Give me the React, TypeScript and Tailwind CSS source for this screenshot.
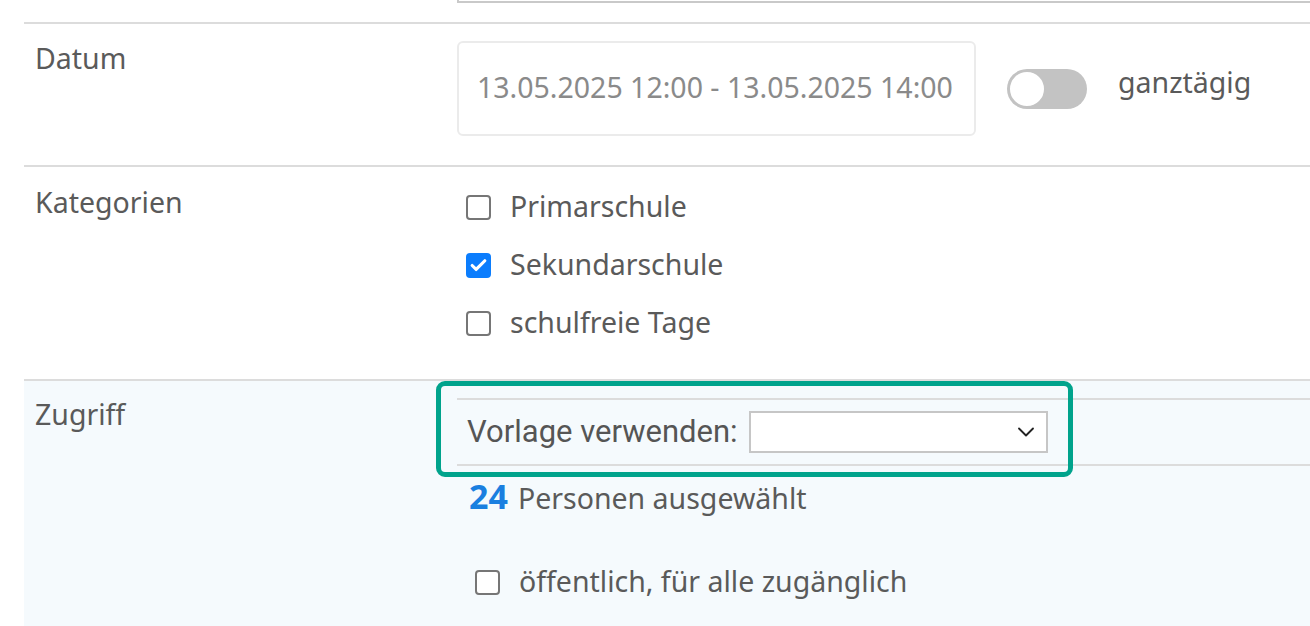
import { Check, ChevronDown } from 'lucide-react';

const font = { fontFamily: '"Noto Sans", Lato, sans-serif' };

function Box({ checked = false }: { checked?: boolean }) {
  if (checked) {
    return (
      <span className="flex h-[25px] w-[25px] shrink-0 items-center justify-center rounded-[4px] bg-[#0b7dfd]">
        <Check className="h-[19px] w-[19px] text-white" strokeWidth={4} />
      </span>
    );
  }
  return <span className="block h-[25px] w-[25px] shrink-0 rounded-[4px] border-2 border-[#767676] bg-white" />;
}

export default function App() {
  return (
    <div className="h-[626px] w-full overflow-hidden bg-white text-[28.5px] text-[#5a5a5a]" style={font}>
      {/* tail of the field above */}
      <div className="ml-[457px] h-[3px] border-b-2 border-l-2 border-[#c9c9c9]" />
      <div className="h-[19px]" />

      <div className="ml-[24px] border-t-2 border-[#dcdcdc]">
        <div className="flex pb-[29px]">
          <div className="w-[433px] pl-[11px] pt-[16px] leading-[36px]">Datum</div>
          <div className="flex items-center pt-[17px]">
            <div className="flex h-[95px] w-[519px] items-center rounded-[6px] border-2 border-[#ebebeb] pb-[3px] pl-[18px] text-[#8a8a8a]">
              13.05.2025 12:00 - 13.05.2025 14:00
            </div>
            <div className="ml-[31px] flex h-[40px] w-[80px] items-center rounded-full bg-[#c3c3c3] pl-[1px]">
              <span className="block h-[38px] w-[38px] rounded-full border-2 border-[#c3c3c3] bg-white" />
            </div>
            <span className="ml-[31px] -mt-[12px]">ganztägig</span>
          </div>
        </div>
      </div>

      <div className="ml-[24px] border-t-2 border-[#dcdcdc]">
        <div className="flex pb-[27px]">
          <div className="w-[433px] pl-[11px] pt-[17px] leading-[36px]">Kategorien</div>
          <div className="pt-[11px]">
            {[
              ['Primarschule', false],
              ['Sekundarschule', true],
              ['schulfreie Tage', false],
            ].map(([label, on]) => (
              <div key={label as string} className="flex h-[58px] items-center gap-[19px] pl-[9px]">
                <Box checked={on as boolean} />
                <span className="-mt-[2px]">{label as string}</span>
              </div>
            ))}
          </div>
        </div>
      </div>

      <div className="relative ml-[24px] h-[300px] border-t-2 border-[#dcdcdc] bg-[#f5fafd]">
        <div className="flex">
          <div className="w-[433px] pl-[11px] pt-[15px] leading-[36px]">Zugriff</div>
          <div className="flex-1 pt-[17px]">
            <div className="flex h-[68px] items-center border-y-2 border-[#dcdcdc] pl-[10px]">
              <span className="mr-[11px] text-[31px] text-[#555]" style={{ fontFamily: 'Roboto, sans-serif' }}>
                Vorlage verwenden:
              </span>
              <div className="flex h-[42px] w-[299px] items-center justify-end border-2 border-[#c6c6c6] bg-white pr-[6px]">
                <ChevronDown className="h-[28px] w-[28px] text-[#222]" strokeWidth={1.6} />
              </div>
            </div>
            <div className="mt-[12px] flex items-baseline pl-[12px] leading-[36px]">
              <span className="mr-[10px] text-[34px] font-bold text-[#1a7fe0]">24</span>
              <span>Personen ausgewählt</span>
            </div>
            <div className="mt-[46px] flex items-center gap-[19px] pl-[18px]">
              <Box />
              <span className="-mt-[2px]">öffentlich, für alle zugänglich</span>
            </div>
          </div>
        </div>
        <div className="pointer-events-none absolute left-[412px] top-0 h-[96px] w-[637px] rounded-[9px] border-[5px] border-[#00a38c]" />
      </div>
    </div>
  );
}
